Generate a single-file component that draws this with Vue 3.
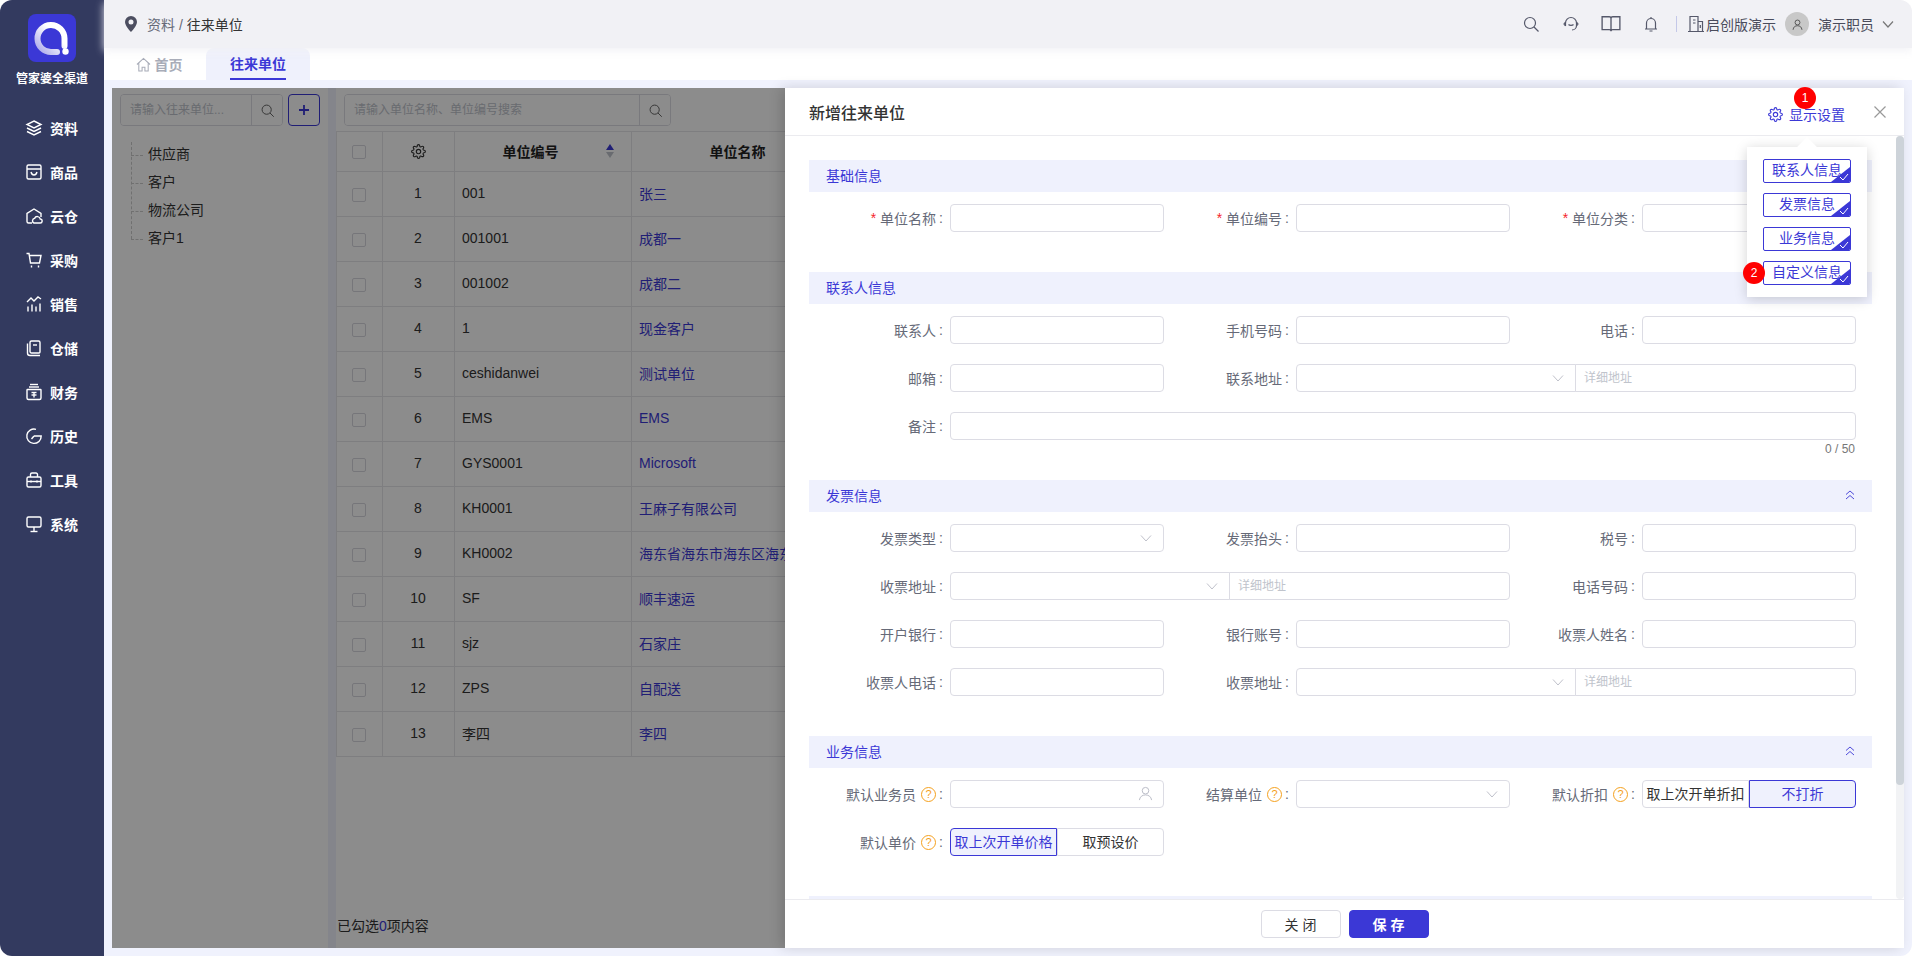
<template>
  <div class="app">
    <aside class="sidebar">
      <div class="logo">
        <svg viewBox="0 0 48 48" width="48" height="48">
          <defs>
            <linearGradient id="ringFill" x1="1" y1="0" x2="0" y2="1">
              <stop offset="0.35" stop-color="#ffffff" />
              <stop offset="1" stop-color="#a9a6ea" />
            </linearGradient>
          </defs>
          <rect width="48" height="48" rx="8" fill="#3b38d6" />
          <path d="M36.5 32V24.5A13.5 13.5 0 1 0 23.5 38H29" fill="none" stroke="url(#ringFill)" stroke-width="6" stroke-linecap="round" />
          <circle cx="37.5" cy="37.5" r="3.2" fill="#fff" />
        </svg>
      </div>
      <div class="brand">管家婆全渠道</div>
      <nav class="nav">
        <div v-for="item in navItems" :key="item.name" class="nav-item">
          <svg class="nav-icon" viewBox="0 0 18 18" width="18" height="18">
            <path v-for="d in item.paths" :key="d" :d="d" />
          </svg>
          <span>{{ item.name }}</span>
        </div>
      </nav>
    </aside>

    <div class="main">
      <header class="topbar">
        <div class="crumb">
          <svg viewBox="0 0 12 16" width="12" height="16"><path d="M6 0a6 6 0 0 0-6 6c0 4 6 10 6 10s6-6 6-10a6 6 0 0 0-6-6zm0 8.5a2.500 2.500 0 1 1 0-5 2.500 2.500 0 0 1 0 5z" fill="#4c4e60" /></svg>
          <span class="crumb-parent">资料 /</span>
          <span class="crumb-current">往来单位</span>
        </div>
        <div class="top-actions">
          <svg class="top-icon" viewBox="0 0 18 18"><circle cx="8" cy="8" r="5.5" /><path d="M12 12l4.5 4.5" /></svg>
          <svg class="top-icon" viewBox="0 0 18 18"><path d="M3.5 11V8a5.5 5.5 0 0 1 11 0v2.5c0 2.5-2 4.5-4.5 4.5" /><path d="M3.5 7L2 9l1.500 2M14.500 7L16 9l-1.500 2M6.500 9.500c1 1.200 4 1.200 5 0" /></svg>
          <svg class="top-icon book" viewBox="0 0 18 18"><path d="M1 2.5h6.500C8.300 2.500 9 3.100 9 4c0-.9.7-1.500 1.500-1.500H17V14h-6.500c-.8 0-1.500.5-1.500 1.500 0-1-.7-1.500-1.500-1.500H1zM9 4v11.500" /></svg>
          <svg class="top-icon" viewBox="0 0 18 18"><path d="M4.5 14V8a4.500 4.500 0 0 1 9 0v6M3 14h12M7.500 16h3M9 2v1.500" /></svg>
          <span class="top-divider"></span>
          <svg class="top-icon shop" viewBox="0 0 18 18"><path d="M3 16V1.500h8V16M11 6.500h4.500V16M1 16.500h16M6 5h2.500M6 8h2.500M13.300 10v3" /></svg>
          <span class="top-text">启创版演示</span>
          <span class="avatar">
            <svg viewBox="0 0 16 16" width="13" height="13"><circle cx="8" cy="5.5" r="3" /><path d="M2.5 14.500c.5-3.500 2.500-5 5.500-5s5 1.500 5.500 5" /></svg>
          </span>
          <span class="top-text user">演示职员</span>
          <svg class="top-icon caret" viewBox="0 0 12 12"><path d="M1 3.500l5 5.500 5-5.500" /></svg>
        </div>
      </header>

      <div class="tabs">
        <div class="tab home">
          <svg viewBox="0 0 16 16" width="15" height="15"><path d="M1 8l7-6.500L15 8M3 6.500V15h3.500v-4h3v4H13V6.500" /></svg>
          <span>首页</span>
        </div>
        <div class="tab active"><span>往来单位</span></div>
      </div>

      <div class="content">
        <div class="page">
          <section class="tree-panel">
            <div class="tree-tools">
              <div class="search small">
                <input placeholder="请输入往来单位..." />
                <button class="search-btn">
                  <svg viewBox="0 0 18 18" width="15" height="15"><circle cx="8" cy="8" r="5.5" /><path d="M12 12l4.5 4.5" /></svg>
                </button>
              </div>
              <button class="add-btn">
                <svg viewBox="0 0 12 12" width="12" height="12"><path d="M6 1v10M1 6h10" /></svg>
              </button>
            </div>
            <ul class="tree">
              <li v-for="name in treeItems" :key="name">{{ name }}</li>
            </ul>
          </section>

          <section class="list-panel">
            <div class="list-tools">
              <div class="search wide">
                <input placeholder="请输入单位名称、单位编号搜索" />
                <button class="search-btn">
                  <svg viewBox="0 0 18 18" width="15" height="15"><circle cx="8" cy="8" r="5.5" /><path d="M12 12l4.5 4.5" /></svg>
                </button>
              </div>
            </div>
            <div class="table-wrap">
              <table class="table">
                <colgroup>
                  <col style="width: 46px" />
                  <col style="width: 72px" />
                  <col style="width: 177px" />
                  <col style="width: 213px" />
                  <col />
                </colgroup>
                <thead>
                  <tr>
                    <th><span class="check"></span></th>
                    <th>
                      <svg class="th-gear" viewBox="0 0 24 24" width="15" height="15"><path :d="gearPath" /><circle cx="12" cy="12" r="3.5" /></svg>
                    </th>
                    <th>
                      <div class="th-sort">
                        <span>单位编号</span>
                        <span class="sort-arrows"><i class="up"></i><i class="down"></i></span>
                      </div>
                    </th>
                    <th>单位名称</th>
                    <th></th>
                  </tr>
                </thead>
                <tbody>
                  <tr v-for="(row, i) in rows" :key="i">
                    <td class="center box"><span class="check"></span></td>
                    <td class="center">{{ i + 1 }}</td>
                    <td>{{ row[0] }}</td>
                    <td class="link">{{ row[1] }}</td>
                    <td></td>
                  </tr>
                </tbody>
              </table>
            </div>
            <div class="list-foot">已勾选<span class="link">0</span>项内容</div>
          </section>
        </div>

        <div class="overlay"></div>

        <div class="drawer">
          <div class="drawer-head">
            <h2>新增往来单位</h2>
            <div class="display-set">
              <svg viewBox="0 0 24 24" width="15" height="15"><path :d="gearPath" /><circle cx="12" cy="12" r="3.5" /></svg>
              <span>显示设置</span>
            </div>
            <svg class="close" viewBox="0 0 12 12" width="12" height="12"><path d="M.5.5l11 11M11.500.5l-11 11" /></svg>
          </div>

          <div class="drawer-main">
            <div class="drawer-body">
              <div v-for="(section, s) in sections" :key="s" class="section">
                <div class="section-head">
                  <span>{{ section.title }}</span>
                  <svg viewBox="0 0 12 12" width="12" height="12"><path d="M2 5.500l4-3.500 4 3.500M2 10l4-3.500 4 3.500" /></svg>
                </div>
                <div class="form-grid">
                  <div
                    v-for="field in section.fields"
                    :key="field.label + field.type"
                    class="field"
                    :class="field.span ? 'span-' + field.span : ''"
                  >
                    <label class="field-label">
                      <em v-if="field.required">*</em>
                      <span>{{ field.label }}</span>
                      <i v-if="field.help" class="help">?</i>
                      <b>:</b>
                    </label>

                    <div v-if="field.type === 'select'" class="control">
                      <svg class="chevron" viewBox="0 0 12 12" width="12" height="12"><path d="M1 3.500l5 5.500 5-5.500" /></svg>
                    </div>

                    <div v-else-if="field.type === 'address'" class="address">
                      <div class="control">
                        <svg class="chevron" viewBox="0 0 12 12" width="12" height="12"><path d="M1 3.500l5 5.500 5-5.500" /></svg>
                      </div>
                      <div class="control detail">详细地址</div>
                    </div>

                    <div v-else-if="field.type === 'user'" class="control">
                      <svg class="user-icon" viewBox="0 0 16 16" width="15" height="15"><circle cx="8" cy="5" r="3.5" /><path d="M1.5 15c.5-3.500 3-5.500 6.500-5.500s6 2 6.500 5.500" /></svg>
                    </div>

                    <div v-else-if="field.type === 'seg'" class="seg">
                      <span
                        v-for="opt in field.options"
                        :key="opt"
                        class="seg-item"
                        :class="{ on: opt === field.value }"
                      >{{ opt }}</span>
                    </div>

                    <div v-else class="control">
                      <span v-if="field.count" class="count">{{ field.count }}</span>
                    </div>
                  </div>
                </div>
              </div>
            </div>
            <div class="scroll-track"><div class="scroll-thumb"></div></div>
          </div>

          <div class="drawer-foot">
            <button class="btn">关 闭</button>
            <button class="btn primary">保 存</button>
          </div>

          <span class="badge one">1</span>
          <div class="popover">
            <div v-for="tag in displayTags" :key="tag" class="tag">
              <span>{{ tag }}</span>
              <svg viewBox="0 0 19 15" width="19" height="15">
                <path d="M19 0v15H0z" fill="#3b38d6" />
                <path d="M9 10l3 3 5-6" fill="none" stroke="#fff" stroke-width="1" />
              </svg>
            </div>
            <span class="badge two">2</span>
          </div>
        </div>
      </div>
    </div>
  </div>
</template>

<script setup>
const gearPath =
  "M19.4 15a1.65 1.65 0 0 0 .33 1.82l.06.06a2 2 0 0 1 0 2.83 2 2 0 0 1-2.83 0l-.06-.06a1.65 1.65 0 0 0-1.82-.33 1.65 1.65 0 0 0-1 1.51V21a2 2 0 0 1-2 2 2 2 0 0 1-2-2v-.09A1.65 1.65 0 0 0 9 19.4a1.65 1.65 0 0 0-1.82.33l-.06.06a2 2 0 0 1-2.83 0 2 2 0 0 1 0-2.83l.06-.06a1.65 1.65 0 0 0 .33-1.82 1.65 1.65 0 0 0-1.51-1H3a2 2 0 0 1-2-2 2 2 0 0 1 2-2h.09A1.65 1.65 0 0 0 4.6 9a1.65 1.65 0 0 0-.33-1.82l-.06-.06a2 2 0 0 1 0-2.83 2 2 0 0 1 2.83 0l.06.06a1.65 1.65 0 0 0 1.82.33H9a1.65 1.65 0 0 0 1-1.51V3a2 2 0 0 1 2-2 2 2 0 0 1 2 2v.09a1.65 1.65 0 0 0 1 1.51 1.65 1.65 0 0 0 1.82-.33l.06-.06a2 2 0 0 1 2.83 0 2 2 0 0 1 0 2.83l-.06.06a1.65 1.65 0 0 0-.33 1.82V9a1.65 1.65 0 0 0 1.51 1H21a2 2 0 0 1 2 2 2 2 0 0 1-2 2h-.09a1.65 1.65 0 0 0-1.51 1z";

const navItems = [
  { name: "资料", paths: ["M9 2l7 3.5L9 9 2 5.5z", "M2 9l7 3.5L16 9", "M2 12.5L9 16l7-3.5"] },
  { name: "商品", paths: ["M3.5 2h11A1.5 1.5 0 0 1 16 3.5v11a1.5 1.5 0 0 1-1.5 1.5h-11A1.5 1.5 0 0 1 2 14.5v-11A1.5 1.5 0 0 1 3.5 2z", "M2 6h14", "M6 9c.5 2 1.6 3 3 3s2.5-1 3-3"] },
  { name: "云仓", paths: ["M7 16H3.5A1.5 1.5 0 0 1 2 14.5v-8L9 2l7 4.5V10", "M9 16h6a2 2 0 0 0 .3-4 3 3 0 0 0-5.7-.6A2.4 2.4 0 0 0 9 16z"] },
  { name: "采购", paths: ["M1.5 2.5H4L5.5 12h9L16 4.5H4.4", "M6.5 14.5v2", "M13.5 14.5v2"] },
  { name: "销售", paths: ["M3 16.5v-5", "M7 16.5v-7", "M11 16.5v-5", "M15 16.5v-8", "M2 7l4-4 3 3 4-4 3 2"] },
  { name: "仓储", paths: ["M5 3.5A1.5 1.5 0 0 1 6.5 2h7A1.5 1.5 0 0 1 15 3.5V13a1 1 0 0 1-1 1H6.5A1.5 1.5 0 0 1 5 12.5z", "M2.5 4.5V14A2.5 2.5 0 0 0 5 16.5h10", "M8 6h4"] },
  { name: "财务", paths: ["M2.5 6.5h13a.5.5 0 0 1 .5.5v8a1.5 1.5 0 0 1-1.5 1.5h-11A1.5 1.5 0 0 1 2 15V7a.5.5 0 0 1 .5-.5z", "M5 1.5h8", "M4 4h10", "M6.5 9.5h5", "M6.5 12h5", "M9 9.5v5"] },
  { name: "历史", paths: ["M11 2.3A7.2 7.2 0 1 0 16.2 9H9", "M9 9l-2.5 3"] },
  { name: "工具", paths: ["M3.5 6h11A1.5 1.5 0 0 1 16 7.5v7a1.5 1.5 0 0 1-1.5 1.5h-11A1.5 1.5 0 0 1 2 14.5v-7A1.5 1.5 0 0 1 3.5 6z", "M5.5 6V3.5A1.5 1.5 0 0 1 7 2h4a1.5 1.5 0 0 1 1.5 1.5V6", "M2 10.5h14", "M6 9.5v2", "M12 9.5v2"] },
  { name: "系统", paths: ["M3.5 2h11A1.5 1.5 0 0 1 16 3.5v7a1.5 1.5 0 0 1-1.5 1.5h-11A1.5 1.5 0 0 1 2 10.5v-7A1.5 1.5 0 0 1 3.5 2z", "M9 12v4", "M5.5 16.5h7"] },
];

const treeItems = ["供应商", "客户", "物流公司", "客户1"];

const rows = [
  ["001", "张三"],
  ["001001", "成都一"],
  ["001002", "成都二"],
  ["1", "现金客户"],
  ["ceshidanwei", "测试单位"],
  ["EMS", "EMS"],
  ["GYS0001", "Microsoft"],
  ["KH0001", "王麻子有限公司"],
  ["KH0002", "海东省海东市海东区海东有限公司"],
  ["SF", "顺丰速运"],
  ["sjz", "石家庄"],
  ["ZPS", "自配送"],
  ["李四", "李四"],
];

const displayTags = ["联系人信息", "发票信息", "业务信息", "自定义信息"];

const sections = [
  {
    title: "基础信息",
    fields: [
      { label: "单位名称", required: true },
      { label: "单位编号", required: true },
      { label: "单位分类", required: true, type: "select" },
    ],
  },
  {
    title: "联系人信息",
    fields: [
      { label: "联系人" },
      { label: "手机号码" },
      { label: "电话" },
      { label: "邮箱" },
      { label: "联系地址", type: "address", span: 2 },
      { label: "备注", span: 3, count: "0 / 50" },
    ],
  },
  {
    title: "发票信息",
    fields: [
      { label: "发票类型", type: "select" },
      { label: "发票抬头" },
      { label: "税号" },
      { label: "收票地址", type: "address", span: 2 },
      { label: "电话号码" },
      { label: "开户银行" },
      { label: "银行账号" },
      { label: "收票人姓名" },
      { label: "收票人电话" },
      { label: "收票地址", type: "address", span: 2 },
    ],
  },
  {
    title: "业务信息",
    fields: [
      { label: "默认业务员", help: true, type: "user" },
      { label: "结算单位", help: true, type: "select" },
      { label: "默认折扣", help: true, type: "seg", options: ["取上次开单折扣", "不打折"], value: "不打折" },
      { label: "默认单价", help: true, type: "seg", options: ["取上次开单价格", "取预设价"], value: "取上次开单价格" },
    ],
  },
  // only the top edge of this band shows above the footer
  { title: "", fields: [] },
];
</script>

<style>
html,
body {
  margin: 0;
  background: #fff;
}
</style>

<style scoped>
.app {
  display: flex;
  height: 100vh;
  overflow: hidden;
  border-radius: 12px;
  font-family: "Liberation Sans", "Noto Sans CJK SC", sans-serif;
  font-size: 14px;
  color: #333;
}

.sidebar {
  width: 104px;
  flex-shrink: 0;
  background: #333a5f;
  display: flex;
  flex-direction: column;
  align-items: center;
  padding-top: 14px;
  box-sizing: border-box;
}

.logo {
  height: 48px;
}

.brand {
  margin-top: 9px;
  font-size: 12px;
  font-weight: 700;
  line-height: 16px;
  color: #fff;
}

.nav {
  margin-top: 19px;
  width: 100%;
}

.nav-item {
  height: 44px;
  display: flex;
  align-items: center;
  gap: 7px;
  padding-left: 25px;
  color: #fff;
  font-weight: 700;
}

.nav-icon {
  fill: none;
  stroke: #fff;
  stroke-width: 1.4;
}

.main {
  flex: 1;
  min-width: 0;
  display: flex;
  flex-direction: column;
}

.topbar {
  height: 48px;
  flex-shrink: 0;
  background: #f1f1f5;
  box-shadow: 0 3px 8px rgba(241, 241, 245, 0.9);
  display: flex;
  align-items: center;
  justify-content: space-between;
  padding: 0 18px 0 21px;
  position: relative;
  z-index: 1;
}

.crumb {
  display: flex;
  align-items: center;
  gap: 6px;
}

.crumb-parent {
  margin-left: 4px;
  color: #666a78;
}

.crumb-current {
  margin-left: -2px;
  color: #333;
}

.top-actions {
  display: flex;
  align-items: center;
}

.top-icon {
  width: 18px;
  height: 18px;
  fill: none;
  stroke: #55586a;
  stroke-width: 1.2;
  margin-right: 22px;
}

.top-icon.book {
  width: 20px;
  height: 20px;
  margin: 0 21px 0 -1px;
}

.top-icon.shop {
  margin-right: 1px;
  margin-left: 1px;
}

.top-icon.caret {
  width: 12px;
  height: 12px;
  margin: 0 0 0 8px;
  stroke: #777;
}

.top-divider {
  width: 1px;
  height: 16px;
  background: #c4c8e8;
  margin: 0 9px 0 -6px;
}

.top-text {
  color: #4a4c5c;
}

.avatar {
  width: 24px;
  height: 24px;
  border-radius: 50%;
  background: #c8c8c8;
  margin: 0 9px;
  display: flex;
  align-items: center;
  justify-content: center;
}

.avatar svg {
  fill: none;
  stroke: #555;
  stroke-width: 1.2;
}

.tabs {
  height: 32px;
  flex-shrink: 0;
  background: #fff;
  display: flex;
  padding-left: 8px;
}

.tab {
  width: 94px;
  display: flex;
  align-items: center;
  justify-content: center;
  gap: 4px;
  font-weight: 700;
}

.tab.home {
  color: #a8acb8;
}

.tab.home svg {
  fill: none;
  stroke: #a8acb8;
  stroke-width: 1.1;
}

.tab.active {
  width: 104px;
  background: #eff1fc;
  border-radius: 8px 8px 0 0;
  color: #3b38d6;
}

.tab.active span {
  height: 100%;
  line-height: 32px;
  border-bottom: 2px solid #3b38d6;
  box-sizing: border-box;
}

.content {
  flex: 1;
  min-height: 0;
  background: #f0f2fd;
  padding: 8px;
  display: flex;
}

.page {
  flex: 1;
  display: flex;
  gap: 8px;
  min-width: 0;
}

.tree-panel {
  width: 216px;
  flex-shrink: 0;
  background: #fff;
  box-sizing: border-box;
  padding: 6px 8px;
}

.tree-tools {
  display: flex;
  gap: 5px;
}

.search {
  height: 32px;
  box-sizing: border-box;
  border: 1px solid #dcdce4;
  border-radius: 4px;
  display: flex;
  overflow: hidden;
}

.search.small {
  width: 163px;
}

.search.wide {
  width: 327px;
}

.search input {
  flex: 1;
  min-width: 0;
  border: none;
  outline: none;
  padding: 0 9px;
  font-family: inherit;
  font-size: 12px;
}

.search input::placeholder {
  color: #c0c4cc;
}

.search-btn {
  width: 31px;
  flex-shrink: 0;
  border: none;
  border-left: 1px solid #dcdce4;
  background: #fff;
  padding: 0;
  display: flex;
  align-items: center;
  justify-content: center;
}

.search-btn svg {
  fill: none;
  stroke: #666;
  stroke-width: 1.2;
}

.add-btn {
  width: 32px;
  height: 32px;
  padding: 0;
  background: #fff;
  border: 1px solid #3b38d6;
  border-radius: 4px;
  display: flex;
  align-items: center;
  justify-content: center;
}

.add-btn svg {
  fill: none;
  stroke: #3b38d6;
  stroke-width: 1.8;
}

.tree {
  list-style: none;
  margin: 14px 0 0 11px;
  padding: 0 0 0 17px;
  position: relative;
}

.tree::before {
  content: "";
  position: absolute;
  left: 0;
  top: 2px;
  bottom: 13px;
  border-left: 1px dashed #ccc;
}

.tree li {
  height: 28px;
  line-height: 28px;
  position: relative;
}

.tree li::before {
  content: "";
  position: absolute;
  left: -17px;
  top: 15px;
  width: 12px;
  border-top: 1px dashed #ccc;
}

.list-panel {
  flex: 1;
  min-width: 0;
  background: #fff;
  display: flex;
  flex-direction: column;
}

.list-tools {
  padding: 6px 8px 5px;
}

.table-wrap {
  flex: 1;
  min-height: 0;
  overflow: hidden;
}

.table {
  width: 100%;
  table-layout: fixed;
  border-collapse: collapse;
}

.table th,
.table td {
  border: 1px solid #e6e6ea;
  padding: 0 8px 2px 7px;
  box-sizing: border-box;
  white-space: nowrap;
  overflow: hidden;
  text-overflow: ellipsis;
}

.table th {
  height: 40px;
  font-weight: 700;
  color: #222;
  text-align: center;
}

.table td {
  height: 45px;
}

.table td.center {
  text-align: center;
}

.table td.box {
  padding-bottom: 0;
}

.check {
  display: inline-block;
  width: 14px;
  height: 14px;
  box-sizing: border-box;
  border: 1px solid #d8d8de;
  border-radius: 2px;
  background: #fff;
  vertical-align: middle;
}

.th-gear {
  fill: none;
  stroke: #333;
  stroke-width: 1.8;
  vertical-align: middle;
}

.th-sort {
  position: relative;
  padding-right: 24px;
}

.sort-arrows {
  position: absolute;
  right: 9px;
  top: 50%;
  transform: translateY(-50%);
  display: flex;
  flex-direction: column;
  gap: 2px;
}

.sort-arrows i {
  width: 0;
  height: 0;
  border-left: 4px solid transparent;
  border-right: 4px solid transparent;
}

.sort-arrows .up {
  border-bottom: 6px solid #3b38d6;
}

.sort-arrows .down {
  border-top: 6px solid #c0c4cc;
}

.link {
  color: #3b38d6;
}

.list-foot {
  height: 44px;
  line-height: 44px;
  padding-left: 1px;
}

.overlay {
  position: absolute;
  left: 112px;
  top: 88px;
  right: 8px;
  bottom: 8px;
  background: rgba(0, 0, 0, 0.45);
}

.drawer {
  position: absolute;
  top: 88px;
  right: 8px;
  bottom: 8px;
  width: 1119px;
  background: #fff;
  display: flex;
  flex-direction: column;
  box-shadow: -4px 0 12px rgba(0, 0, 0, 0.15);
}

.drawer-head {
  height: 48px;
  flex-shrink: 0;
  box-sizing: border-box;
  border-bottom: 1px solid #ebebef;
  display: flex;
  align-items: center;
  padding: 0 18px 0 24px;
}

.drawer-head h2 {
  margin: 0;
  font-size: 16px;
  font-weight: 500;
  color: #333;
  flex: 1;
}

.display-set {
  display: flex;
  align-items: center;
  gap: 6px;
  color: #3b38d6;
  margin-top: 5px;
}

.display-set svg {
  fill: none;
  stroke: #3b38d6;
  stroke-width: 1.8;
}

.close {
  margin-left: 29px;
  fill: none;
  stroke: #999;
  stroke-width: 1.2;
}

.drawer-main {
  flex: 1;
  min-height: 0;
  position: relative;
  overflow: hidden;
}

.drawer-body {
  padding: 24px 32px 0 24px;
}

.scroll-track {
  position: absolute;
  top: 0;
  right: 0;
  bottom: 0;
  width: 8px;
  border-radius: 4px;
  background: #f2f3f5;
}

.scroll-thumb {
  height: 649px;
  border-radius: 4px;
  background: #cdd3d9;
}

.section {
  margin-bottom: 20px;
}

.section-head {
  height: 32px;
  box-sizing: border-box;
  background: #eff1fd;
  display: flex;
  align-items: center;
  justify-content: space-between;
  padding: 0 16px 2px 17px;
  color: #3b38d6;
  margin-bottom: 12px;
}

.section-head svg {
  fill: none;
  stroke: #3b38d6;
  stroke-width: 0.9;
}

.form-grid {
  display: grid;
  grid-template-columns: 346px 346px 355px;
  row-gap: 20px;
  padding-bottom: 20px;
}

.field {
  width: 355px;
  height: 28px;
  display: flex;
  align-items: center;
  gap: 7px;
}

.field.span-2 {
  width: 701px;
  grid-column: span 2;
}

.field.span-3 {
  width: 1047px;
  grid-column: span 3;
}

.field-label {
  width: 134px;
  flex-shrink: 0;
  display: flex;
  align-items: center;
  justify-content: flex-end;
  color: #666a78;
  white-space: nowrap;
}

.field-label em {
  font-style: normal;
  color: #f5222d;
  margin-right: 4px;
}

.field-label b {
  font-weight: 400;
  margin-left: 3px;
}

.help {
  width: 15px;
  height: 15px;
  box-sizing: border-box;
  margin-left: 5px;
  border: 1.5px solid #f5a11e;
  border-radius: 50%;
  color: #f5a11e;
  font-style: normal;
  font-size: 11px;
  line-height: 12px;
  text-align: center;
}

.control {
  flex: 1;
  min-width: 0;
  height: 28px;
  box-sizing: border-box;
  border: 1px solid #dcdce4;
  border-radius: 4px;
  position: relative;
}

.chevron {
  position: absolute;
  right: 11px;
  top: 7px;
  fill: none;
  stroke: #b8bac4;
  stroke-width: 0.9;
}

.user-icon {
  position: absolute;
  right: 10px;
  top: 5px;
  fill: none;
  stroke: #b8bac4;
  stroke-width: 1;
}

.address {
  flex: 1;
  display: flex;
}

.address .control:first-child {
  flex: none;
  width: 280px;
  border-radius: 4px 0 0 4px;
}

.address .detail {
  margin-left: -1px;
  border-radius: 0 4px 4px 0;
  font-size: 12px;
  line-height: 26px;
  padding-left: 8px;
  color: #c0c4cc;
}

.count {
  position: absolute;
  right: 0;
  top: 28px;
  font-size: 12px;
  line-height: 16px;
  color: #777;
  white-space: nowrap;
}

.seg {
  flex: 1;
  display: flex;
  height: 28px;
}

.seg-item {
  flex: 1;
  box-sizing: border-box;
  border: 1px solid #dcdce4;
  text-align: center;
  line-height: 26px;
  color: #333;
  white-space: nowrap;
}

.seg-item:first-child {
  border-radius: 4px 0 0 4px;
}

.seg-item:last-child {
  border-radius: 0 4px 4px 0;
}

.seg-item.on {
  border-color: #3b38d6;
  background: #eff1fd;
  color: #3b38d6;
}

.drawer-foot {
  height: 49px;
  flex-shrink: 0;
  box-sizing: border-box;
  border-top: 1px solid #ebebef;
  display: flex;
  justify-content: center;
  align-items: center;
  gap: 8px;
}

.btn {
  width: 80px;
  height: 28px;
  padding: 0;
  background: #fff;
  border: 1px solid #dcdce4;
  border-radius: 4px;
  font-family: inherit;
  font-size: 14px;
  color: #333;
}

.btn.primary {
  background: #3b38d6;
  border-color: #3b38d6;
  color: #fff;
  font-weight: 700;
}

.badge {
  position: absolute;
  width: 22px;
  height: 22px;
  border-radius: 50%;
  background: #f00;
  color: #fff;
  font-size: 12px;
  line-height: 22px;
  text-align: center;
  z-index: 3;
}

.badge.one {
  top: -1px;
  right: 88px;
}

.badge.two {
  left: -4px;
  top: 115px;
}

.popover {
  position: absolute;
  top: 59px;
  right: 37px;
  width: 120px;
  box-sizing: border-box;
  padding: 12px 16px;
  background: #fff;
  box-shadow: 0 2px 12px rgba(0, 0, 0, 0.18);
  display: flex;
  flex-direction: column;
  gap: 10px;
  z-index: 2;
}

.popover::before {
  content: "";
  position: absolute;
  top: -7px;
  left: 53px;
  width: 14px;
  height: 14px;
  background: #fff;
  transform: rotate(45deg);
}

.tag {
  position: relative;
  height: 24px;
  box-sizing: border-box;
  border: 1px solid #3b38d6;
  border-radius: 2px;
  color: #3b38d6;
  line-height: 20px;
  text-align: center;
  overflow: hidden;
  white-space: nowrap;
}

.tag svg {
  position: absolute;
  right: 0;
  bottom: 0;
}
</style>
